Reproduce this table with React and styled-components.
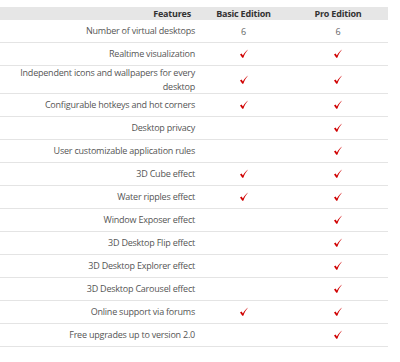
import React from "react";
import styled, { createGlobalStyle } from "styled-components";

const features = [
  { name: "Number of virtual desktops", basic: "6", pro: "6" },
  { name: "Realtime visualization", basic: true, pro: true },
  { name: "Independent icons and wallpapers for every desktop", basic: true, pro: true },
  { name: "Configurable hotkeys and hot corners", basic: true, pro: true },
  { name: "Desktop privacy", basic: false, pro: true },
  { name: "User customizable application rules", basic: false, pro: true },
  { name: "3D Cube effect", basic: true, pro: true },
  { name: "Water ripples effect", basic: true, pro: true },
  { name: "Window Exposer effect", basic: false, pro: true },
  { name: "3D Desktop Flip effect", basic: false, pro: true },
  { name: "3D Desktop Explorer effect", basic: false, pro: true },
  { name: "3D Desktop Carousel effect", basic: false, pro: true },
  { name: "Online support via forums", basic: true, pro: true },
  { name: "Free upgrades up to version 2.0", basic: false, pro: true },
];

const Check = () => (
  <svg width="10" height="10" viewBox="0 0 10 10">
    <path
      d="M1 5.6 L2.6 4.6 L3.9 6.6 C5.2 4.2 6.8 2.2 9.2 0.6 C7.2 2.8 5.6 5.2 4.3 8.8 L3.3 8.8 Z"
      fill="#d00000"
    />
  </svg>
);

const Cell = ({ value }) => {
  if (value === true) return <Check />;
  if (!value) return null;
  return value;
};

const App = () => {
  return (
    <>
      <GlobalStyle />
      <Table>
        <Header>
          <HeadCell $align="right">Features</HeadCell>
          <HeadCell>Basic Edition</HeadCell>
          <HeadCell>Pro Edition</HeadCell>
        </Header>
        {features.map((f) => (
          <Row key={f.name}>
            <Name>{f.name}</Name>
            <Value>
              <Cell value={f.basic} />
            </Value>
            <Value>
              <Cell value={f.pro} />
            </Value>
          </Row>
        ))}
      </Table>
    </>
  );
};

export default App;

const GlobalStyle = createGlobalStyle`
  body {
    margin: 0;
    background: #fff;
    font-family: "Open Sans", "DejaVu Sans", sans-serif;
  }
`;

const Table = styled.div`
  width: 388px;
  padding-top: 7px;
`;

const Header = styled.div`
  display: grid;
  grid-template-columns: 199px 89px 100px;
  background-color: #e6e6e6;
  height: 13px;
  align-items: center;
`;

const HeadCell = styled.div`
  font-size: 9px;
  font-weight: 700;
  color: #333;
  line-height: 13px;
  letter-spacing: -0.2px;
  text-align: ${(p) => p.$align || "center"};
  padding-right: ${(p) => (p.$align ? "8px" : "0")};
`;

const Row = styled.div`
  display: grid;
  grid-template-columns: 199px 89px 100px;
  min-height: 22px;
  align-items: center;
  border-bottom: 1px solid #e4e4e4;
`;

const Name = styled.div`
  font-size: 9px;
  color: #555;
  line-height: 13.5px;
  letter-spacing: -0.22px;
  text-align: right;
  padding-left: 16px;
  padding-right: 4px;
`;

const Value = styled.div`
  font-size: 9px;
  color: #666;
  line-height: 13px;
  display: flex;
  justify-content: center;
  align-items: center;
`;
